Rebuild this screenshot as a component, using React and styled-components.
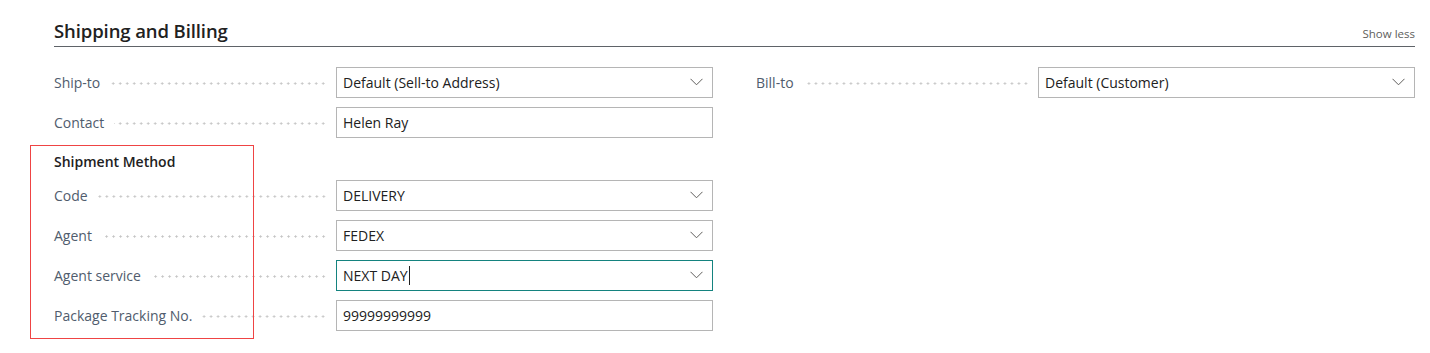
import React from "react";
import styled, { createGlobalStyle } from "styled-components";

const Global = createGlobalStyle`
  body {
    margin: 0;
    background: #fff;
    font-family: "Open Sans", "Noto Sans", sans-serif;
  }
`;

const Page = styled.div`
  position: relative;
  width: 1430px;
  height: 353px;
  box-sizing: border-box;
  padding: 15px 15px 0 54px;
`;

const Header = styled.div`
  display: flex;
  align-items: flex-end;
  justify-content: space-between;
  height: 32px;
  border-bottom: 1px solid #5f6368;
  box-sizing: border-box;
  padding-bottom: 3px;
`;

const Title = styled.h2`
  margin: 0;
  font-size: 18.5px;
  line-height: 24px;
  font-weight: 600;
  color: #212121;
  letter-spacing: -0.1px;
`;

const ShowLess = styled.span`
  font-size: 11.5px;
  color: #605e5c;
  margin-bottom: 2px;
`;

const Columns = styled.div`
  display: grid;
  grid-template-columns: 659px 659px;
  column-gap: 43px;
  margin-top: 20px;
`;

const Column = styled.div`
  display: flex;
  flex-direction: column;
  gap: 10px;
`;

const Row = styled.div`
  display: flex;
  align-items: center;
  height: 30px;
`;

const LabelCell = styled.div`
  display: flex;
  align-items: center;
  width: 282px;
  flex-shrink: 0;
`;

const Label = styled.span`
  font-size: 14px;
  color: #505c6d;
  white-space: nowrap;
`;

const Leader = styled.span`
  flex: 1;
  height: 3px;
  margin: 2px 9px 0 10px;
  background-image: radial-gradient(circle, #c4c4c4 0.9px, transparent 1.3px);
  background-size: 7px 3px;
  background-repeat: repeat-x;
  background-position: right center;
`;

const Field = styled.div`
  display: flex;
  align-items: center;
  justify-content: space-between;
  width: 377px;
  height: 31px;
  box-sizing: border-box;
  border: 1px solid ${({ focused }) => (focused ? "#14837f" : "#b5b5b5")};
  padding: 0 9px 0 6px;
  font-size: 14px;
  color: #212121;
`;

const Value = styled.span`
  display: flex;
  align-items: center;
  white-space: nowrap;
`;

const Caret = styled.span`
  display: inline-block;
  width: 1px;
  height: 19px;
  background: #212121;
  margin-left: 1px;
`;

const SubHeading = styled.div`
  height: 23px;
  padding-top: 5px;
  box-sizing: border-box;
  display: flex;
  align-items: center;
  font-size: 14px;
  font-weight: 600;
  color: #212121;
`;

const Spacer = styled.div`
  height: 30px;
`;

const Highlight = styled.div`
  position: absolute;
  left: 30px;
  top: 145px;
  width: 224px;
  height: 194px;
  border: 1.5px solid #ef4444;
  box-sizing: border-box;
  pointer-events: none;
`;

const Chevron = () => (
  <svg width="13" height="8" viewBox="0 0 13 8">
    <path d="M0.5 0.8 L6.5 6.8 L12.5 0.8" fill="none" stroke="#605e5c" strokeWidth="1" />
  </svg>
);

const FieldRow = ({ label, value, select, focused, caret }) => (
  <Row>
    <LabelCell>
      <Label>{label}</Label>
      <Leader />
    </LabelCell>
    <Field focused={focused}>
      <Value>
        {value}
        {caret && <Caret />}
      </Value>
      {select && <Chevron />}
    </Field>
  </Row>
);

export default function App() {
  return (
    <>
      <Global />
      <Page>
        <Header>
          <Title>Shipping and Billing</Title>
          <ShowLess>Show less</ShowLess>
        </Header>
        <Columns>
          <Column>
            <FieldRow label="Ship-to" value="Default (Sell-to Address)" select />
            <FieldRow label="Contact" value="Helen Ray" />
            <SubHeading>Shipment Method</SubHeading>
            <FieldRow label="Code" value="DELIVERY" select />
            <FieldRow label="Agent" value="FEDEX" select />
            <FieldRow label="Agent service" value="NEXT DAY" select focused caret />
            <FieldRow label="Package Tracking No." value="99999999999" />
          </Column>
          <Column>
            <FieldRow label="Bill-to" value="Default (Customer)" select />
            <Spacer />
          </Column>
        </Columns>
        <Highlight />
      </Page>
    </>
  );
}
